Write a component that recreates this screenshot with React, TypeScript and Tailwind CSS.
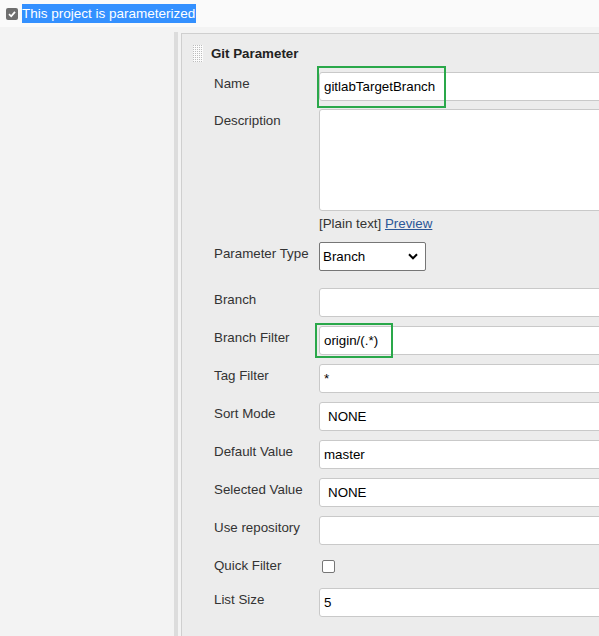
import type { ReactNode } from 'react'

function Row({ label, children, className = '' }: { label: string; children: ReactNode; className?: string }) {
  return (
    <div className={`flex ${className}`}>
      <div className="w-[105px] shrink-0 pt-[4px] leading-[16px] text-[#333]">{label}</div>
      <div className="relative">{children}</div>
    </div>
  )
}

function TextBox({ value = '', pad = 'pl-[4px]' }: { value?: string; pad?: string }) {
  return (
    <div className={`h-[29px] w-[320px] rounded-[3px] border border-[#c9c9c9] bg-white ${pad} flex items-center text-black`}>
      {value}
    </div>
  )
}

function Grip() {
  const dots = []
  for (let y = 0; y < 17; y += 2) {
    for (let x = 0; x < 10; x += 2) {
      dots.push(<rect key={`${x}-${y}`} x={x} y={y} width="1" height="1" fill="#bdbdbd" />)
    }
  }
  return (
    <svg width="10" height="17" viewBox="0 0 10 17" className="shrink-0 block">
      <rect width="10" height="17" fill="#fbfbfb" />
      {dots}
    </svg>
  )
}

export default function App() {
  return (
    <div className="w-[599px] h-[636px] overflow-hidden bg-[#f3f3f3] font-['Liberation_Sans',Arial,sans-serif] text-[13.33px] flex flex-col">
      <div className="h-[27px] shrink-0 bg-[#fafafa] flex items-center pl-[6px]">
        <div className="w-[12px] h-[12px] rounded-[2px] bg-[#6f6f6f] flex items-center justify-center">
          <svg width="10" height="10" viewBox="0 0 10 10">
            <path d="M2 5.2 L4.2 7.3 L8 2.8" stroke="white" strokeWidth="1.8" fill="none" />
          </svg>
        </div>
        <span className="ml-[4px] bg-[#3390ff] text-white text-[13.5px] leading-[19px] pr-[1px]">This project is parameterized</span>
      </div>

      <div className="flex flex-1">
        <div className="w-[174px] shrink-0" />
        <div className="w-[4px] shrink-0 mt-[5px] bg-[#dcdcdc]" />
        <div className="w-[3px] shrink-0" />
        <div className="flex-1 mt-[6px] border-l border-t border-[#cfcfcf] bg-[#ececec]">
          <div className="flex items-center pl-[11px] pt-[11px] h-[17px] box-content">
            <Grip />
            <span className="ml-[8px] font-bold text-[#222] leading-[17px]">Git Parameter</span>
          </div>

          <div className="ml-[32px] mt-[10px] flex flex-col">
            <Row label="Name" className="mb-[8px]">
              <TextBox value="gitlabTargetBranch" />
              <div className="absolute left-[-2px] top-[-6px] w-[129px] h-[42px] border-2 border-[#2aa84a]" />
            </Row>
            <Row label="Description">
              <div className="h-[102px] w-[320px] rounded-[3px] border border-[#c9c9c9] bg-white" />
              <div className="mt-[5px] leading-[16px] text-[#333]">
                [Plain text] <span className="text-[#2b5797] underline">Preview</span>
              </div>
            </Row>
            <Row label="Parameter Type" className="mt-[10px] mb-[17px]">
              <div className="h-[29px] w-[107px] rounded-[2px] border border-[#767676] bg-white flex items-center justify-between pl-[3px] pr-[7px] text-black">
                Branch
                <svg width="10" height="7" viewBox="0 0 10 7">
                  <path d="M1 1.3 L5 5.3 L9 1.3" stroke="black" strokeWidth="2" fill="none" />
                </svg>
              </div>
            </Row>
            <Row label="Branch" className="mb-[9px]">
              <TextBox />
            </Row>
            <Row label="Branch Filter" className="mb-[9px]">
              <TextBox value="origin/(.*)" />
              <div className="absolute left-[-4px] top-[-3px] w-[78px] h-[35px] border-2 border-[#2aa84a]" />
            </Row>
            <Row label="Tag Filter" className="mb-[9px]">
              <TextBox value="*" />
            </Row>
            <Row label="Sort Mode" className="mb-[9px]">
              <TextBox value="NONE" pad="pl-[8px]" />
            </Row>
            <Row label="Default Value" className="mb-[9px]">
              <TextBox value="master" />
            </Row>
            <Row label="Selected Value" className="mb-[9px]">
              <TextBox value="NONE" pad="pl-[8px]" />
            </Row>
            <Row label="Use repository" className="mb-[9px]">
              <TextBox />
            </Row>
            <Row label="Quick Filter" className="h-[25px] mb-[9px]">
              <div className="mt-[6px] ml-[3px] w-[13px] h-[13px] rounded-[2px] border border-[#767676] bg-white" />
            </Row>
            <Row label="List Size">
              <TextBox value="5" />
            </Row>
          </div>
        </div>
      </div>
    </div>
  )
}
